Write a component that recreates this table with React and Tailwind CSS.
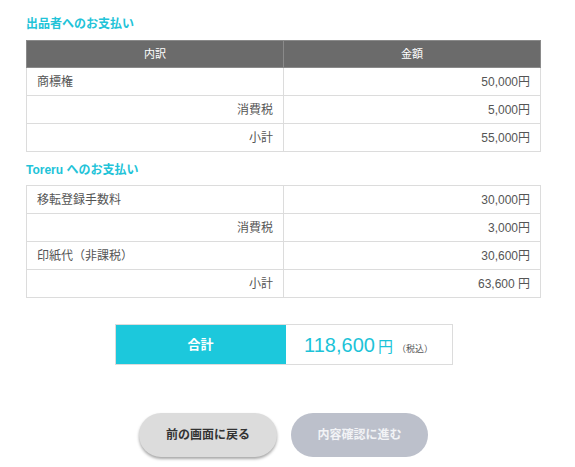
import React from 'react';

const font = { fontFamily: '"Liberation Sans", "Noto Sans CJK JP", sans-serif' };

const sellerRows = [
  { label: '商標権', amount: '50,000円', right: false },
  { label: '消費税', amount: '5,000円', right: true },
  { label: '小計', amount: '55,000円', right: true },
];

const toreruRows = [
  { label: '移転登録手数料', amount: '30,000円', right: false },
  { label: '消費税', amount: '3,000円', right: true },
  { label: '印紙代（非課税）', amount: '30,600円', right: false },
  { label: '小計', amount: '63,600 円', right: true },
];

const Row = ({ label, amount, right }) => (
  <tr className="h-[28px]">
    <td className={`border border-[#dcdcdc] px-[10px] text-[12px] text-[#555] ${right ? 'text-right' : 'text-left'}`}>{label}</td>
    <td className="border border-[#dcdcdc] px-[10px] text-right text-[12px] text-[#555]">{amount}</td>
  </tr>
);

const PriceTable = ({ rows, header }) => (
  <table className="w-[515px] table-fixed border-collapse">
    {header && (
      <thead>
        <tr className="h-[27px] bg-[#6b6b6b]">
          <th className="border border-[#8a8a8a] text-[11px] font-normal text-white">内訳</th>
          <th className="border border-[#8a8a8a] text-[11px] font-normal text-white">金額</th>
        </tr>
      </thead>
    )}
    <tbody>
      {rows.map((r, i) => <Row key={i} {...r} />)}
    </tbody>
  </table>
);

export default function App() {
  return (
    <div className="w-[575px] h-[467px] bg-white" style={font}>
      <div className="pl-[26px] pt-[17px]">
        <h2 className="mb-[8px] h-[15px] text-[12px] font-bold leading-[15px] text-[#22c3d8]">出品者へのお支払い</h2>
        <PriceTable rows={sellerRows} header />
        <h2 className="mt-[11px] mb-[7px] h-[15px] text-[12px] font-bold leading-[15px] text-[#22c3d8]">Toreru へのお支払い</h2>
        <PriceTable rows={toreruRows} />
      </div>

      <div className="mt-[26px] flex justify-center pr-[8px]">
        <div className="flex h-[41px] w-[338px] border border-[#dcdcdc]">
          <div className="flex w-[170px] items-center justify-center bg-[#1cc8dc] text-[13px] font-bold text-white">合計</div>
          <div className="flex flex-1 items-center justify-center">
            <div className="flex items-baseline">
              <span className="text-[20px] text-[#1cc3d8]">118,600</span>
              <span className="ml-[3px] text-[15px] text-[#1cc3d8]">円</span>
              <span className="ml-[4px] text-[9px] text-[#555]">（税込）</span>
            </div>
          </div>
        </div>
      </div>

      <div className="mt-[48px] flex justify-center gap-[14px] pr-[8px]">
        <button className="h-[44px] w-[138px] rounded-full bg-[#dcdcdc] text-[12px] font-bold text-[#333] shadow-[0_2px_3px_rgba(0,0,0,0.35)]">前の画面に戻る</button>
        <button className="h-[44px] w-[137px] rounded-full bg-[#bcc0cb] text-[12px] font-bold text-[#f2f3f6]">内容確認に進む</button>
      </div>
    </div>
  );
}
